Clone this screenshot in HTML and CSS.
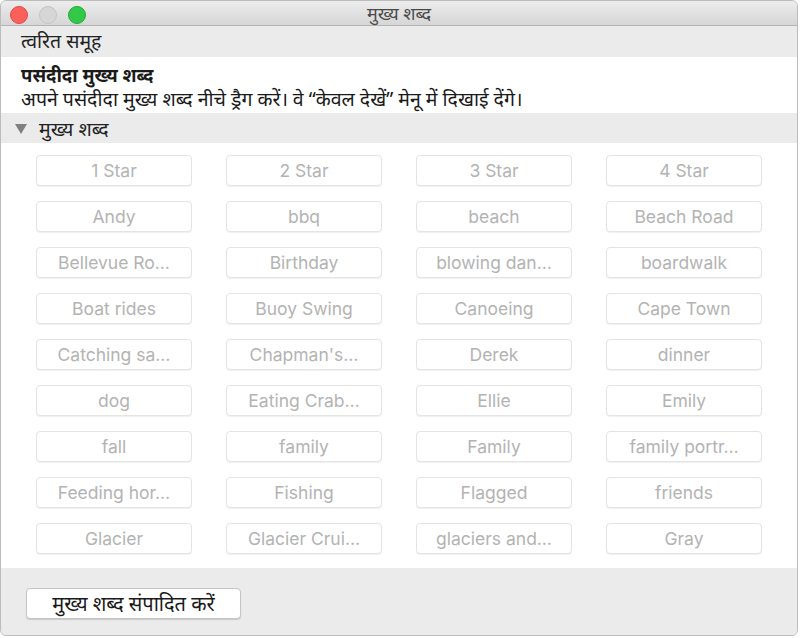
FILE: index.html
```html
<!DOCTYPE html>
<html lang="hi">
<head>
<meta charset="utf-8">
<title>मुख्य शब्द</title>
<link rel="stylesheet" href="styles.css">
</head>
<body>
<div class="window">
  <div class="titlebar">
    <div class="lights">
      <span class="light red"></span>
      <span class="light gray"></span>
      <span class="light green"></span>
    </div>
    <div class="title">मुख्य शब्द</div>
  </div>
  <div class="quick">त्वरित समूह</div>
  <div class="fav">
    <div class="fav-title">पसंदीदा मुख्य शब्द</div>
    <div class="fav-desc">अपने पसंदीदा मुख्य शब्द नीचे ड्रैग करें। वे “केवल देखें” मेनू में दिखाई देंगे।</div>
  </div>
  <div class="section">
    <svg class="tri" width="12" height="10" viewBox="0 0 12 10"><polygon points="0,0 12,0 6,10" fill="#808080"/></svg>
    <span>मुख्य शब्द</span>
  </div>
  <div class="grid">
    <div class="kw">1 Star</div><div class="kw">2 Star</div><div class="kw">3 Star</div><div class="kw">4 Star</div>
    <div class="kw">Andy</div><div class="kw">bbq</div><div class="kw">beach</div><div class="kw">Beach Road</div>
    <div class="kw">Bellevue Ro…</div><div class="kw">Birthday</div><div class="kw">blowing dan…</div><div class="kw">boardwalk</div>
    <div class="kw">Boat rides</div><div class="kw">Buoy Swing</div><div class="kw">Canoeing</div><div class="kw">Cape Town</div>
    <div class="kw">Catching sa…</div><div class="kw">Chapman's…</div><div class="kw">Derek</div><div class="kw">dinner</div>
    <div class="kw">dog</div><div class="kw">Eating Crab…</div><div class="kw">Ellie</div><div class="kw">Emily</div>
    <div class="kw">fall</div><div class="kw">family</div><div class="kw">Family</div><div class="kw">family portr…</div>
    <div class="kw">Feeding hor…</div><div class="kw">Fishing</div><div class="kw">Flagged</div><div class="kw">friends</div>
    <div class="kw">Glacier</div><div class="kw">Glacier Crui…</div><div class="kw">glaciers and…</div><div class="kw">Gray</div>
  </div>
  <div class="footer">
    <button class="edit">मुख्य शब्द संपादित करें</button>
  </div>
</div>
</body>
</html>
```

FILE: styles.css
```css
* { box-sizing: border-box; }
html, body { margin: 0; padding: 0; background: #ffffff; }
body {
  width: 801px;
  height: 638px;
  font-family: "Noto Sans", "Lohit Devanagari", sans-serif;
}
.window {
  width: 798px;
  height: 636px;
  border: 1px solid #bcbcbc;
  border-radius: 6px;
  overflow: hidden;
  display: flex;
  flex-direction: column;
  background: #ececec;
}
.titlebar {
  height: 25px;
  flex: none;
  background: linear-gradient(#ececec, #d6d6d6);
  border-bottom: 1px solid #b4b4b4;
  display: flex;
  align-items: center;
  position: relative;
}
.lights {
  display: flex;
  gap: 11px;
  padding-left: 9px;
  padding-top: 3px;
}
.light {
  width: 18px;
  height: 18px;
  border-radius: 50%;
  display: block;
}
.light.red { background: #fc605b; border: 1px solid #de4a44; }
.light.gray { background: #d6d6d6; border: 1px solid #c4c4c4; }
.light.green { background: #34c84a; border: 1px solid #23a936; }
.title {
  position: absolute;
  left: 0;
  right: 0;
  top: 0;
  text-align: center;
  font-size: 18px;
  color: #4a4a4a;
  line-height: 24px;
}
.quick {
  height: 31px;
  flex: none;
  background: #ebebeb;
  font-size: 19.5px;
  color: #222;
  padding-left: 20px;
  line-height: 30px;
}
.fav {
  height: 56px;
  flex: none;
  background: #ffffff;
  padding: 5px 0 0 20px;
  color: #1a1a1a;
  font-size: 19.5px;
  line-height: 24px;
}
.fav-title { font-weight: bold; font-size: 18.5px; line-height: 25px; }
.section {
  height: 30px;
  flex: none;
  background: #ebebeb;
  display: flex;
  align-items: center;
  padding-left: 14px;
  font-size: 19.5px;
  color: #222;
}
.tri { margin-right: 12px; margin-top: 1px; }
.grid {
  height: 425px;
  flex: none;
  background: #ffffff;
  padding: 12px 0 0 35px;
  display: grid;
  grid-template-columns: repeat(4, 156px);
  grid-auto-rows: 31px;
  column-gap: 34px;
  row-gap: 15px;
  align-content: start;
}
.kw {
  border: 1px solid #e4e4e4;
  border-radius: 4px;
  box-shadow: 0 1px 1px rgba(0,0,0,0.06);
  background: #fff;
  color: #b3b3b3;
  font-family: Inter, "Liberation Sans", sans-serif;
  font-size: 17.5px;
  display: flex;
  align-items: center;
  justify-content: center;
  white-space: nowrap;
  overflow: hidden;
}
.footer {
  flex: 1;
  background: #ebebeb;
  padding: 20px 0 0 25px;
}
.edit {
  width: 215px;
  height: 31px;
  background: #ffffff;
  border: 1px solid #c6c6c6;
  border-radius: 4px;
  box-shadow: 0 1px 1px rgba(0,0,0,0.15);
  font-family: "Noto Sans", "Lohit Devanagari", sans-serif;
  font-size: 20px;
  color: #1a1a1a;
  padding: 0;
  line-height: 28px;
}
```
